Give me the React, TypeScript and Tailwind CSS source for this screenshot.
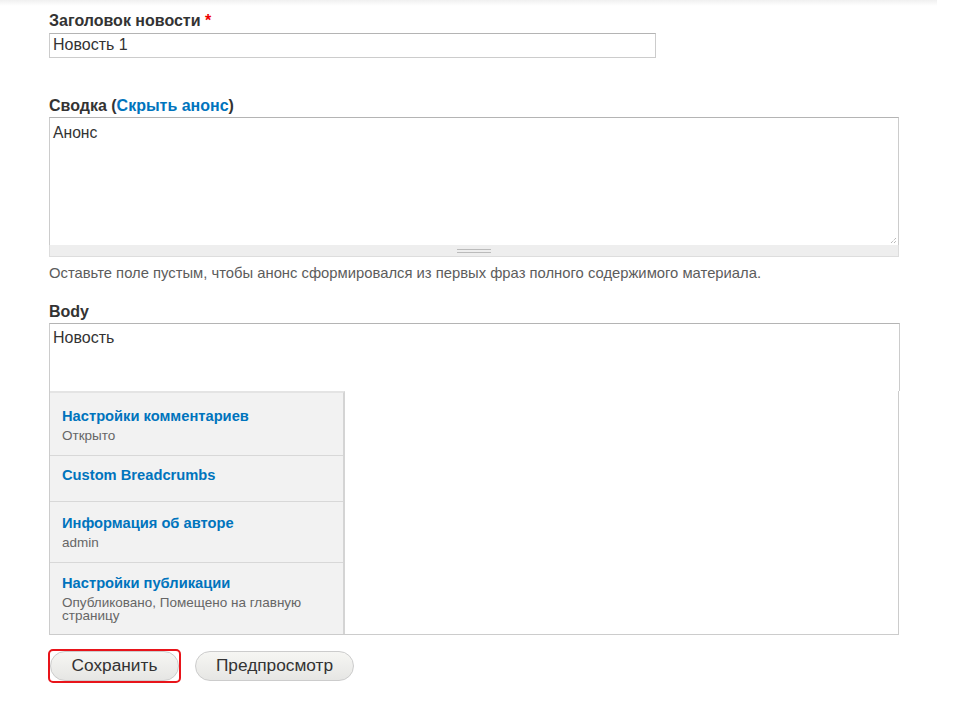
import React from 'react';

const tabs = [
  { title: 'Настройки комментариев', summary: 'Открыто', h: 'h-[63px] pt-[14px]' },
  { title: 'Custom Breadcrumbs', summary: '', h: 'h-[46px] pt-[10px]' },
  { title: 'Информация об авторе', summary: 'admin', h: 'h-[61px] pt-[12px]' },
  { title: 'Настройки публикации', summary: 'Опубликовано, Помещено на главную страницу', h: 'h-[72px] pt-[11px]' },
];

const App: React.FC = () => {
  return (
    <div className="w-[953px] h-[702px] bg-white text-[#333] font-['Liberation_Sans',Arial,sans-serif] overflow-hidden">
      <div className="w-[937px] h-[6px] bg-gradient-to-b from-[#f0f0f0] to-white" />

      <div className="pl-[49px] pr-[54px]">
        {/* Title */}
        <div className="mt-[6px]">
          <label className="block text-[16px] font-bold leading-[18px]">
            Заголовок новости <span className="text-[#e00]">*</span>
          </label>
          <div className="mt-[3px] w-[607px] h-[25px] border border-[#ccc] border-t-[#b4b4b4] px-[3px] text-[16px] leading-[22px]">
            Новость 1
          </div>
        </div>

        {/* Summary */}
        <div className="mt-[39px]">
          <label className="block text-[16px] font-bold leading-[18px]">
            Сводка (<span className="text-[#0074bd]">Скрыть анонс</span>)
          </label>
          <div className="mt-[2px] w-[850px]">
            <div className="relative h-[128px] border border-[#ccc] border-t-[#b4b4b4] border-b-0 px-[3px] pt-[6px] text-[15.7px] leading-[17px]">
              Анонс
              <svg className="absolute right-[1px] bottom-[1px]" width="7" height="7" viewBox="0 0 7 7">
                <path d="M1 6 L6 1 M4 6 L6 4" stroke="#999" strokeWidth="1" strokeDasharray="1 1" />
              </svg>
            </div>
            <div className="h-[12px] bg-[#eee] border border-t-0 border-[#ddd] flex items-center justify-center">
              <div className="w-[34px] h-[4px] border-t border-b border-[#bbb]" />
            </div>
          </div>
          <p className="mt-[8px] text-[14.8px] leading-[17px] text-[#5c5c5c]">
            Оставьте поле пустым, чтобы анонс сформировался из первых фраз полного содержимого материала.
          </p>
        </div>

        {/* Body */}
        <div className="mt-[21px]">
          <label className="block text-[16px] font-bold leading-[18px]">Body</label>
          <div className="mt-[2px] w-[851px] h-[68px] border border-[#ccc] border-t-[#b4b4b4] border-b-0 px-[3px] pt-[5px] text-[16px] leading-[18px]">
            Новость
          </div>
          <div className="w-[850px] h-[244px] flex border border-[#ccc] border-t-0">
            <ul className="w-[295px] bg-[#f2f2f2] border-r-2 border-[#d4d4d4] border-t-2 border-t-[#e4e4e4]">
              {tabs.map((t, i) => (
                <li
                  key={t.title}
                  className={`${t.h} px-[12px] ${i < tabs.length - 1 ? 'border-b border-[#d8d8d8]' : ''}`}
                >
                  <div className="text-[14.7px] font-bold leading-[18px] text-[#0074bd]">{t.title}</div>
                  {t.summary && (
                    <div className="mt-[4px] text-[13.5px] leading-[13px] text-[#666] pr-[4px]">{t.summary}</div>
                  )}
                </li>
              ))}
            </ul>
            <div className="flex-1 bg-white" />
          </div>
        </div>

        {/* Actions */}
        <div className="mt-[14px] -ml-[1px] flex items-center gap-[14px]">
          <div className="rounded-[5px] border-2 border-[#e8141a]">
            <button className="block h-[30px] w-[129px] rounded-full border border-[#ccc] bg-gradient-to-b from-[#f6f6f3] to-[#e6e6e4] text-[17.3px] text-[#333]">
              Сохранить
            </button>
          </div>
          <button className="h-[30px] w-[159px] rounded-full border border-[#ccc] bg-gradient-to-b from-[#f6f6f3] to-[#e6e6e4] text-[17.3px] text-[#333]">
            Предпросмотр
          </button>
        </div>
      </div>
    </div>
  );
};

export default App;
